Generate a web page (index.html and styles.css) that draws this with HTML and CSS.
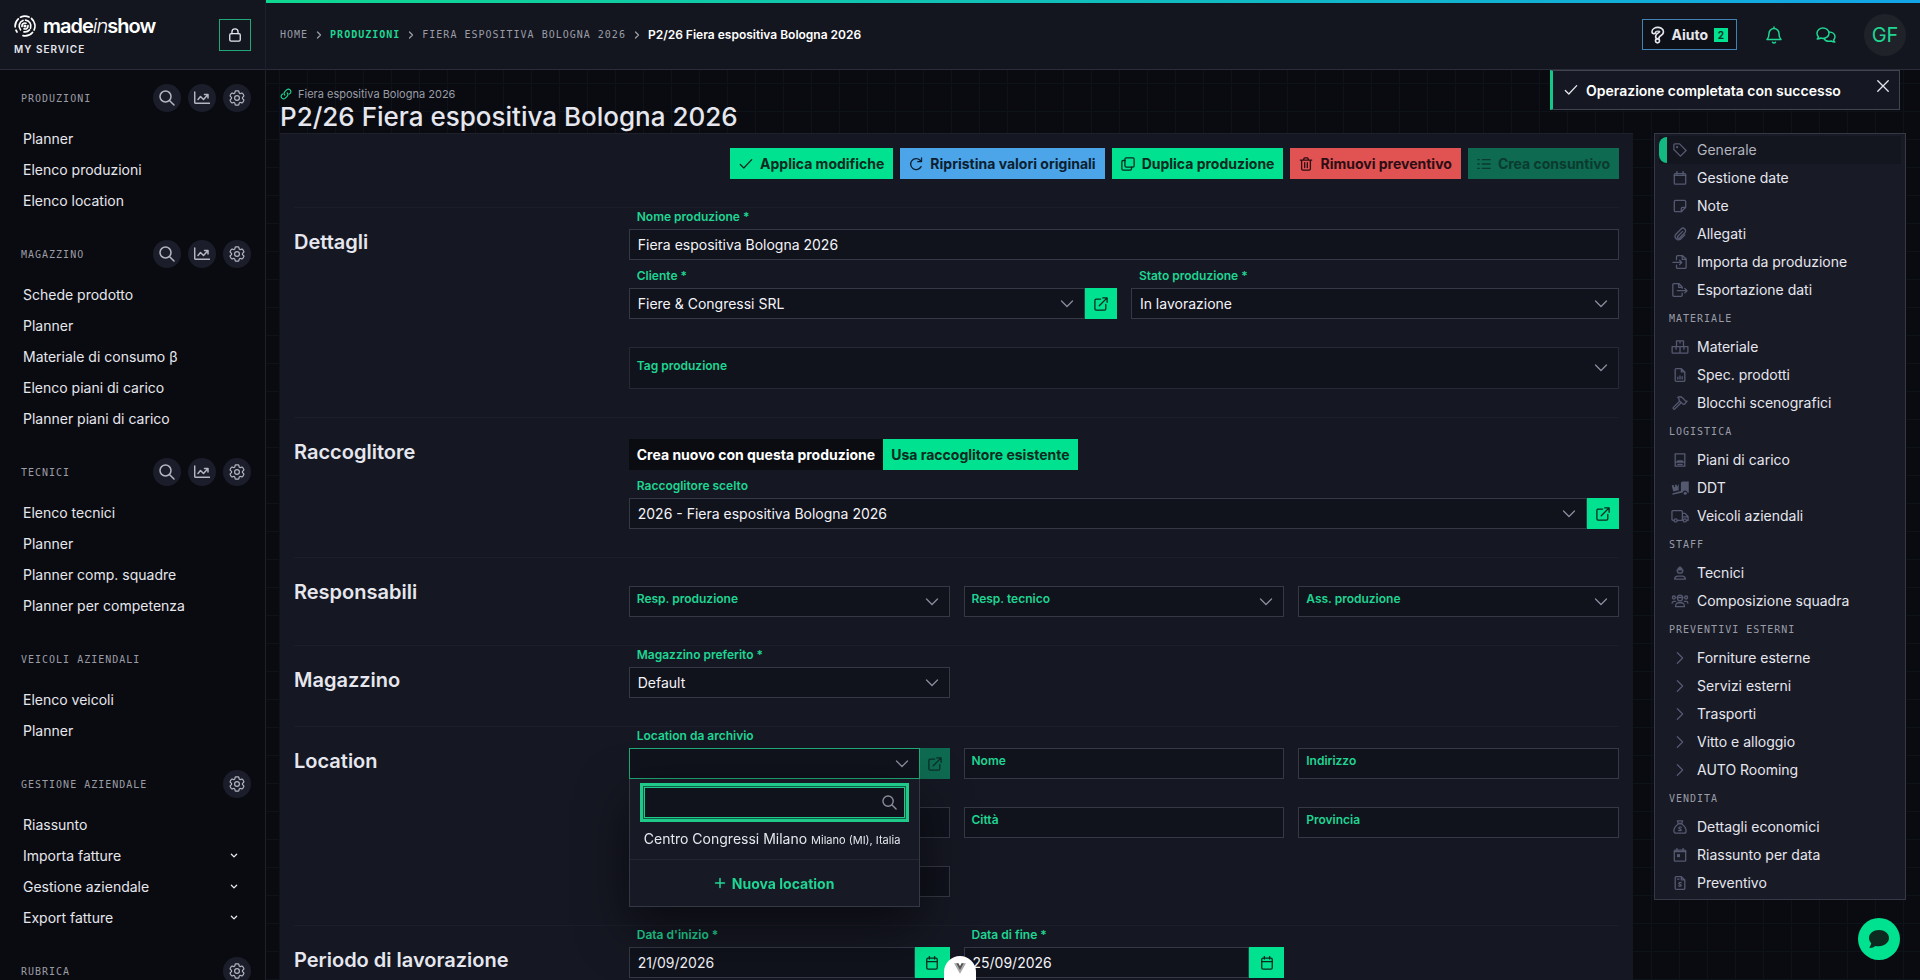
FILE: index.html
```html
<!DOCTYPE html>
<html lang="it">
<head>
  <meta charset="UTF-8">
  <title>P2/26 Fiera espositiva Bologna 2026</title>
  <meta name="viewport" content="width=device-width, initial-scale=1.0">
  <link rel="stylesheet" href="styles.css">
</head>
<body>

<!-- icons -->
<svg class="sprite" aria-hidden="true">
  <symbol id="i-search" viewBox="0 0 16 16"><circle cx="6.5" cy="6.5" r="5.5"/><path d="M10.7 10.7 15 15"/></symbol>
  <symbol id="i-chart" viewBox="0 0 16 16"><path d="M.7 2v10.3c0 .6.3 1 1 1H15.5M4 9.5l2.5-3 3 3L13.5 5M10.5 4.500H14V8"/></symbol>
  <symbol id="i-gear" viewBox="2 2 20 20"><path d="M9.594 3.94c.09-.542.56-.94 1.11-.94h2.593c.55 0 1.02.398 1.11.94l.213 1.281c.063.374.313.686.645.87.074.04.147.083.22.127.325.196.72.257 1.075.124l1.217-.456a1.125 1.125 0 0 1 1.37.49l1.296 2.247a1.125 1.125 0 0 1-.26 1.431l-1.003.827c-.293.241-.438.613-.43.992a7.723 7.723 0 0 1 0 .255c-.008.378.137.75.43.991l1.004.827c.424.35.534.955.26 1.43l-1.298 2.247a1.125 1.125 0 0 1-1.369.491l-1.217-.456c-.355-.133-.75-.072-1.076.124a6.47 6.47 0 0 1-.22.128c-.331.183-.581.495-.644.869l-.213 1.281c-.09.543-.56.94-1.11.94h-2.594c-.55 0-1.019-.398-1.11-.94l-.213-1.281c-.062-.374-.312-.686-.644-.87a6.52 6.52 0 0 1-.22-.127c-.325-.196-.72-.257-1.076-.124l-1.217.456a1.125 1.125 0 0 1-1.369-.49l-1.297-2.247a1.125 1.125 0 0 1 .26-1.431l1.004-.827c.292-.24.437-.613.43-.991a6.932 6.932 0 0 1 0-.255c.007-.38-.138-.751-.43-.992l-1.004-.827a1.125 1.125 0 0 1-.26-1.43l1.297-2.247a1.125 1.125 0 0 1 1.37-.491l1.216.456c.356.133.751.072 1.076-.124.072-.044.146-.086.22-.128.332-.183.582-.495.644-.869l.214-1.28Z"/><circle cx="12" cy="12" r="3"/></symbol>
  <symbol id="i-down" viewBox="0 0 16 16"><path d="m5 6 3 3 3-3"/></symbol>
  <symbol id="i-right" viewBox="0 0 16 16"><path d="m5 2 6 6-6 6"/></symbol>
  <symbol id="i-lock" viewBox="0 0 16 16"><rect x="2" y="6.5" width="12" height="8.5" rx="1.5"/><path d="M4.500 6.500V4.500a3.500 3.500 0 0 1 7 0v2"/></symbol>
  <symbol id="i-link" viewBox="0 0 16 16"><path d="M6.500 9.500a3.300 3.300 0 0 1 0-4.600l2.700-2.700a3.300 3.300 0 0 1 4.600 4.600L12.500 8M9.500 6.500a3.300 3.300 0 0 1 0 4.600l-2.700 2.700a3.300 3.300 0 0 1-4.600-4.600L3.500 8"/></symbol>
  <symbol id="i-check" viewBox="0 0 16 16"><path d="m1.500 8.500 4 4 9-9.500"/></symbol>
  <symbol id="i-redo" viewBox="0 0 16 16"><path d="M13.800 11A6.300 6.300 0 1 1 12.700 3.700L14.300 5.200M14.300 1v4.300H10"/></symbol>
  <symbol id="i-copy" viewBox="0 0 16 16"><rect x="4.500" y="1" width="10.500" height="10.500" rx="1.500"/><path d="M4.500 4H2.500A1.500 1.500 0 0 0 1 5.500v8A1.500 1.500 0 0 0 2.500 15h8a1.500 1.500 0 0 0 1.500-1.500v-2"/></symbol>
  <symbol id="i-trash" viewBox="0 0 16 16"><path d="M1.500 3.500h13M5 3.500 6 1h4l1 2.500M3 3.500v10A1.500 1.500 0 0 0 4.500 15h7a1.500 1.500 0 0 0 1.500-1.500v-10M6.500 6.500v5.500M9.500 6.500v5.500"/></symbol>
  <symbol id="i-list" viewBox="0 0 16 16"><path d="M6 3h9M6 8h9M6 13h9M1 3h1.500M1 8h1.500M1 13h1.500"/></symbol>
  <symbol id="i-open" viewBox="0 0 16 16"><path d="M7.500 2.500h-5A1.500 1.500 0 0 0 1 4v9.500A1.500 1.500 0 0 0 2.500 15H12a1.500 1.500 0 0 0 1.500-1.500v-5M10 1h5v5M15 1 6 10"/></symbol>
  <symbol id="i-cal" viewBox="0 0 16 16"><rect x="2" y="2.500" width="12" height="12.500" rx="1.500"/><path d="M2 6.500h12M5 .5v3M11 .5v3"/></symbol>
  <symbol id="i-plus" viewBox="0 0 16 16"><path d="M8 2v12M2 8h12"/></symbol>
  <symbol id="i-close" viewBox="0 0 16 16"><path d="m2 2 12 12M14 2 2 14"/></symbol>
  <symbol id="i-help" viewBox="0 0 16 20">
    <path class="q-out" d="M4 6.500C4 3 12.500 2.500 12.500 6.500c0 3-4.500 2.500-4.500 5.500"/>
    <circle class="q-dot" cx="8" cy="16.500" r="2.200"/>
    <path class="q-in" d="M4 6.500C4 3 12.500 2.500 12.500 6.500c0 3-4.500 2.500-4.500 5.500"/>
  </symbol>
  <symbol id="i-bell" viewBox="0 0 16 18"><path d="M8 1v1.500M1 13.500h14c-1.500-1.500-2-3-2-6a5 5 0 0 0-10 0c0 3-.5 4.500-2 6Z"/><path d="M6.500 16.200a1.700 1.700 0 0 0 3 0"/></symbol>
  <symbol id="i-chats" viewBox="0 0 20 16"><path d="M1.200 12C2 11.200 2.400 10.500 2.500 9.800A5 5 0 0 1 1 6.200C1 3.300 3.700 1 7 1s6 2.300 6 5.200-2.700 5.200-6 5.200a7 7 0 0 1-2.200-.4c-1 .6-2.200 1-3.600 1Z"/><path d="M13 5c3.400 0 6 2 6 4.800a5 5 0 0 1-1.400 3.200c.1.700.5 1.400 1.200 2-1.400 0-2.500-.4-3.500-1-3.200.8-6.300-.4-7.400-2.600"/></symbol>
  <symbol id="i-tag" viewBox="0 0 16 16"><path d="M1 2v5.500L8.500 15 15 8.500 7.500 1H2a1 1 0 0 0-1 1Z"/><circle cx="4.700" cy="4.700" r=".6"/></symbol>
  <symbol id="i-date" viewBox="0 0 16 16"><rect x="1.500" y="3" width="13" height="12" rx="1"/><path d="M1.500 5h13M4.500.5V4M11.500.5V4"/></symbol>
  <symbol id="i-note" viewBox="0 0 16 16"><path d="M9.500 14.500H3A1.500 1.500 0 0 1 1.500 13V3A1.500 1.500 0 0 1 3 1.500h10A1.500 1.500 0 0 1 14.500 3v6.500l-5 5v-3.500a1.500 1.500 0 0 1 1.500-1.500h3.500"/></symbol>
  <symbol id="i-clip" viewBox="0 0 16 16"><path d="m11 5-5.500 5.500a1.300 1.300 0 0 0 2 2L13.500 6.500a3 3 0 0 0-4.300-4.300L3 8.500A4 4 0 0 0 8.500 14l5-5"/></symbol>
  <symbol id="i-import" viewBox="0 0 16 16"><path d="M4 5.500V2A1.200 1.200 0 0 1 5.200.8H11L15 4.500V14a1.200 1.200 0 0 1-1.200 1.200H5.200A1.200 1.200 0 0 1 4 14v-2.500M10.500 1v4H15M0 8.500h10M7.500 6 10 8.500 7.500 11"/></symbol>
  <symbol id="i-export" viewBox="0 0 18 16"><path d="M11.500 6V4.500L8 .8H2A1.200 1.200 0 0 0 .8 2v12A1.200 1.200 0 0 0 2 15.200h8.300a1.200 1.200 0 0 0 1.200-1.200v-2.500M7.500 1v4h4M6 8.800h11M14.500 6.300 17 8.800l-2.500 2.500"/></symbol>
  <symbol id="i-boxes" viewBox="0 0 20 16"><path d="M6 1h8v6.500H6ZM1 7.500h9V15H2a1 1 0 0 1-1-1ZM10 7.500h9V14a1 1 0 0 1-1 1h-8ZM10 1v2.500M5.500 8v2.500M14.500 8v2.500"/></symbol>
  <symbol id="i-spec" viewBox="0 0 16 16"><path d="M2.500 2A1.200 1.200 0 0 1 3.700.8H9.500L13.500 4.500V14a1.200 1.200 0 0 1-1.200 1.200H3.700A1.200 1.200 0 0 1 2.500 14ZM9.500 1v3.500h4M5.500 10.500v2M8 9v3.500M10.500 10v2.500"/></symbol>
  <symbol id="i-hammer" viewBox="0 0 18 16"><path d="m8.500 6-7 7a1 1 0 0 0 1.700 1.700l7-7M6.500 1.500c2-1 4-.8 5.500.7L15 5.500l2 .5-3 3.500-2-.5-4-4V3.500Z"/></symbol>
  <symbol id="i-load" viewBox="0 0 16 16"><path d="M2.500 1h11v14h-11ZM2.500 10.500h11M5.500 13h5M4.500 10.500l1-1.500h5l1 1.500"/></symbol>
  <symbol id="i-ddt" viewBox="0 0 20 16"><path class="solid" d="M11 2 12.500.5H20V13.500h-1.200a3 3 0 0 0-5.800-.5L1.500 15.800 1 14.300 11 11.500ZM.5 5l2-.6.9 2.600 1.200-.4L4 4.500 6 4l.8 2.500L8.500 3v7.500L2.300 12Z"/><circle class="solid" cx="16" cy="14" r="1.800"/></symbol>
  <symbol id="i-truck" viewBox="0 0 20 16"><path d="M3 13H2a1.200 1.200 0 0 1-1.200-1.200V3A1.200 1.200 0 0 1 2 1.800h9.500A1.200 1.200 0 0 1 12.700 3v10H7M12.700 5h3l3.500 3.500V13H18M12.700 9h6.500"/><circle cx="5" cy="13" r="1.800"/><circle cx="15.500" cy="13" r="1.800"/></symbol>
  <symbol id="i-tech" viewBox="0 0 16 16"><path class="solid" d="M4 5h8v-.8h-.8A3.300 3.300 0 0 0 9 1.200V.5H7v.7a3.300 3.300 0 0 0-2.200 3H4Z"/><path d="M4.800 5a3.200 3.200 0 0 0 6.400 0M2 15a3.500 3.500 0 0 1 3.500-3.500h5A3.500 3.500 0 0 1 14 15Z"/></symbol>
  <symbol id="i-team" viewBox="0 0 20 16"><path d="M6.500 4h7M7.200 4a2.800 2.800 0 0 1 5.600 0v1a2.800 2.800 0 0 1-5.600 0ZM5 14.500v-1A3.500 3.500 0 0 1 8.500 10h3a3.500 3.500 0 0 1 3.500 3.500v1ZM1 10.500A2 2 0 0 1 3 8.500h2M19 10.500a2 2 0 0 0-2-2h-2"/><circle cx="3" cy="4" r="1.700"/><circle cx="17" cy="4" r="1.700"/></symbol>
  <symbol id="i-money" viewBox="0 0 16 16"><path d="M5 1h6L10 4H6ZM6 4.500C3 6.500 1 9.500 1 12.500A2.500 2.500 0 0 0 3.500 15h9a2.500 2.500 0 0 0 2.500-2.500c0-3-2-6-5-8ZM9.500 8.300C8 7.500 6.500 8 6.700 9.200c.2 1 2.600.8 2.700 2 .1 1.100-1.700 1.300-2.900.6"/></symbol>
  <symbol id="i-day" viewBox="0 0 16 16"><rect x="1.500" y="2.500" width="13" height="12.500" rx="1"/><path d="M1.500 4h13M4.500.5V3M11.500.5V3"/><path class="solid" d="M4.500 7H8v3.500H4.500z"/></symbol>
  <symbol id="i-quote" viewBox="0 0 16 16"><path d="M2.500 2A1.200 1.200 0 0 1 3.700.8H9.500L13.500 4.500V14a1.200 1.200 0 0 1-1.200 1.200H3.700A1.200 1.200 0 0 1 2.500 14ZM9.500 1v3.500h4M9.500 7.700C8 7 6.500 7.500 6.700 8.700c.2 1 2.600.8 2.700 2 .1 1.100-1.700 1.300-2.900.6M5 3.500h2"/></symbol>
</svg>

<div class="app">
  <aside class="sidebar">
    <div class="brand">
      <div>
        <a href="#" class="logo">
          <svg class="logo-mark" viewBox="0 0 22 22" fill="none" stroke="currentColor" stroke-width="1.700" stroke-linecap="round">
            <circle cx="11" cy="11" r="1.600" fill="currentColor" stroke="none"/>
            <path d="M6.500 14.800A5.900 5.900 0 0 1 9 5.500M11.500 5.100a5.900 5.900 0 0 1 5 8M15.500 14.900a5.900 5.900 0 0 1-5.500 1.900M8 11.500a3 3 0 0 1 4-3.300M14 10.500a3 3 0 0 1-4 3.300"/>
            <path d="M1.200 12A9.900 9.900 0 0 1 4.300 3.800M3 17a9.900 9.900 0 0 1-1-1.800M6.500 2.200A9.900 9.900 0 0 1 15 2M17.500 3.500a9.900 9.900 0 0 1 2.600 11.500M18.500 17.500A9.900 9.900 0 0 1 9 20.700"/>
          </svg>
          <span>made<i>in</i>show</span>
        </a>
        <div class="brand-sub">MY SERVICE</div>
      </div>
      <button class="lock-btn" aria-label="Blocca menu"><svg class="icon"><use href="#i-lock"/></svg></button>
    </div>

    <nav class="menu">
      <section>
        <header>
          <h2>PRODUZIONI</h2>
          <button class="round" aria-label="Cerca"><svg class="icon"><use href="#i-search"/></svg></button>
          <button class="round" aria-label="Statistiche"><svg class="icon"><use href="#i-chart"/></svg></button>
          <button class="round" aria-label="Impostazioni"><svg class="icon"><use href="#i-gear"/></svg></button>
        </header>
        <a href="#">Planner</a>
        <a href="#">Elenco produzioni</a>
        <a href="#">Elenco location</a>
      </section>
      <section>
        <header>
          <h2>MAGAZZINO</h2>
          <button class="round" aria-label="Cerca"><svg class="icon"><use href="#i-search"/></svg></button>
          <button class="round" aria-label="Statistiche"><svg class="icon"><use href="#i-chart"/></svg></button>
          <button class="round" aria-label="Impostazioni"><svg class="icon"><use href="#i-gear"/></svg></button>
        </header>
        <a href="#">Schede prodotto</a>
        <a href="#">Planner</a>
        <a href="#">Materiale di consumo β</a>
        <a href="#">Elenco piani di carico</a>
        <a href="#">Planner piani di carico</a>
      </section>
      <section>
        <header>
          <h2>TECNICI</h2>
          <button class="round" aria-label="Cerca"><svg class="icon"><use href="#i-search"/></svg></button>
          <button class="round" aria-label="Statistiche"><svg class="icon"><use href="#i-chart"/></svg></button>
          <button class="round" aria-label="Impostazioni"><svg class="icon"><use href="#i-gear"/></svg></button>
        </header>
        <a href="#">Elenco tecnici</a>
        <a href="#">Planner</a>
        <a href="#">Planner comp. squadre</a>
        <a href="#">Planner per competenza</a>
      </section>
      <section>
        <header>
          <h2>VEICOLI AZIENDALI</h2>
        </header>
        <a href="#">Elenco veicoli</a>
        <a href="#">Planner</a>
      </section>
      <section>
        <header>
          <h2>GESTIONE AZIENDALE</h2>
          <button class="round" aria-label="Impostazioni"><svg class="icon"><use href="#i-gear"/></svg></button>
        </header>
        <a href="#">Riassunto</a>
        <a href="#">Importa fatture <svg class="icon"><use href="#i-down"/></svg></a>
        <a href="#">Gestione aziendale <svg class="icon"><use href="#i-down"/></svg></a>
        <a href="#">Export fatture <svg class="icon"><use href="#i-down"/></svg></a>
      </section>
      <section>
        <header>
          <h2>RUBRICA</h2>
          <button class="round" aria-label="Impostazioni"><svg class="icon"><use href="#i-gear"/></svg></button>
        </header>
      </section>
    </nav>
  </aside>

  <div class="main">
    <header class="topbar">
      <nav class="crumbs">
        <a href="#">HOME</a>
        <svg class="icon"><use href="#i-right"/></svg>
        <a href="#" class="active">PRODUZIONI</a>
        <svg class="icon"><use href="#i-right"/></svg>
        <a href="#">FIERA ESPOSITIVA BOLOGNA 2026</a>
        <svg class="icon"><use href="#i-right"/></svg>
        <strong>P2/26 Fiera espositiva Bologna 2026</strong>
      </nav>
      <button class="help-btn"><svg class="icon"><use href="#i-help"/></svg>Aiuto<span class="count">2</span></button>
      <button class="top-icon" aria-label="Notifiche"><svg class="icon"><use href="#i-bell"/></svg></button>
      <button class="top-icon" aria-label="Messaggi"><svg class="icon"><use href="#i-chats"/></svg></button>
      <button class="avatar">GF</button>
    </header>

    <div class="content">
      <div class="page-head">
        <a href="#"><svg class="icon"><use href="#i-link"/></svg>Fiera espositiva Bologna 2026</a>
        <h1>P2/26 Fiera espositiva Bologna 2026</h1>
      </div>

      <div class="columns">
        <form class="panel">
          <div class="toolbar">
            <button type="button" class="btn"><svg class="icon"><use href="#i-check"/></svg>Applica modifiche</button>
            <button type="button" class="btn blue"><svg class="icon"><use href="#i-redo"/></svg>Ripristina valori originali</button>
            <button type="button" class="btn"><svg class="icon"><use href="#i-copy"/></svg>Duplica produzione</button>
            <button type="button" class="btn red"><svg class="icon"><use href="#i-trash"/></svg>Rimuovi preventivo</button>
            <button type="button" class="btn" disabled><svg class="icon"><use href="#i-list"/></svg>Crea consuntivo</button>
          </div>

          <section class="group">
            <h2>Dettagli</h2>
            <div class="fields two">
              <div class="field wide">
                <label for="nome">Nome produzione *</label>
                <input id="nome" type="text" value="Fiera espositiva Bologna 2026">
              </div>
              <div class="field">
                <label for="cliente">Cliente *</label>
                <div class="joined">
                  <select id="cliente"><option>Fiere &amp; Congressi SRL</option></select>
                  <button type="button" class="side-btn" aria-label="Apri cliente"><svg class="icon"><use href="#i-open"/></svg></button>
                </div>
              </div>
              <div class="field">
                <label for="stato">Stato produzione *</label>
                <select id="stato"><option>In lavorazione</option></select>
              </div>
              <div class="field wide inside tags">
                <select id="tag"><option></option></select>
                <label for="tag">Tag produzione</label>
              </div>
            </div>
          </section>

          <section class="group">
            <h2>Raccoglitore</h2>
            <div class="fields">
              <div class="switch">
                <button type="button">Crea nuovo con questa produzione</button>
                <button type="button" class="on">Usa raccoglitore esistente</button>
              </div>
              <div class="field">
                <label for="raccoglitore">Raccoglitore scelto</label>
                <div class="joined">
                  <select id="raccoglitore"><option>2026 - Fiera espositiva Bologna 2026</option></select>
                  <button type="button" class="side-btn" aria-label="Apri raccoglitore"><svg class="icon"><use href="#i-open"/></svg></button>
                </div>
              </div>
            </div>
          </section>

          <section class="group">
            <h2>Responsabili</h2>
            <div class="fields three spaced">
              <div class="field inside">
                <select id="resp-prod"><option></option></select>
                <label for="resp-prod">Resp. produzione</label>
              </div>
              <div class="field inside">
                <select id="resp-tec"><option></option></select>
                <label for="resp-tec">Resp. tecnico</label>
              </div>
              <div class="field inside">
                <select id="ass-prod"><option></option></select>
                <label for="ass-prod">Ass. produzione</label>
              </div>
            </div>
          </section>

          <section class="group">
            <h2>Magazzino</h2>
            <div class="fields three">
              <div class="field">
                <label for="magazzino">Magazzino preferito *</label>
                <select id="magazzino"><option>Default</option></select>
              </div>
            </div>
          </section>

          <section class="group">
            <h2>Location</h2>
            <div class="fields three">
              <div class="field">
                <label for="location">Location da archivio</label>
                <div class="joined">
                  <div class="combo">
                    <select id="location" class="open"><option></option></select>
                    <div class="dropdown">
                      <div class="dropdown-search">
                        <input type="text" aria-label="Cerca location">
                        <svg class="icon"><use href="#i-search"/></svg>
                      </div>
                      <button type="button" class="dropdown-option">Centro Congressi Milano <small>Milano (MI), Italia</small></button>
                      <button type="button" class="dropdown-add"><svg class="icon"><use href="#i-plus"/></svg>Nuova location</button>
                    </div>
                  </div>
                  <button type="button" class="side-btn" aria-label="Apri location" disabled><svg class="icon"><use href="#i-open"/></svg></button>
                </div>
              </div>
              <div class="field inside">
                <input id="loc-nome" type="text">
                <label for="loc-nome">Nome</label>
              </div>
              <div class="field inside">
                <input id="indirizzo" type="text">
                <label for="indirizzo">Indirizzo</label>
              </div>
              <div class="field inside">
                <input id="cap" type="text">
                <label for="cap">CAP</label>
              </div>
              <div class="field inside">
                <input id="citta" type="text">
                <label for="citta">Città</label>
              </div>
              <div class="field inside">
                <input id="provincia" type="text">
                <label for="provincia">Provincia</label>
              </div>
              <div class="field inside">
                <input id="nazione" type="text">
                <label for="nazione">Nazione</label>
              </div>
            </div>
          </section>

          <section class="group">
            <h2>Periodo di lavorazione</h2>
            <div class="fields three">
              <div class="field">
                <label for="inizio">Data d'inizio *</label>
                <div class="joined">
                  <input id="inizio" type="text" value="21/09/2026">
                  <button type="button" class="side-btn date" aria-label="Scegli data d'inizio"><svg class="icon"><use href="#i-cal"/></svg></button>
                </div>
              </div>
              <div class="field">
                <label for="fine">Data di fine *</label>
                <div class="joined">
                  <input id="fine" type="text" value="25/09/2026">
                  <button type="button" class="side-btn date" aria-label="Scegli data di fine"><svg class="icon"><use href="#i-cal"/></svg></button>
                </div>
              </div>
            </div>
          </section>
        </form>

        <nav class="toc">
          <a href="#" class="current"><svg class="icon"><use href="#i-tag"/></svg>Generale</a>
          <a href="#"><svg class="icon"><use href="#i-date"/></svg>Gestione date</a>
          <a href="#"><svg class="icon"><use href="#i-note"/></svg>Note</a>
          <a href="#"><svg class="icon"><use href="#i-clip"/></svg>Allegati</a>
          <a href="#"><svg class="icon"><use href="#i-import"/></svg>Importa da produzione</a>
          <a href="#"><svg class="icon"><use href="#i-export"/></svg>Esportazione dati</a>
          <h3>MATERIALE</h3>
          <a href="#"><svg class="icon"><use href="#i-boxes"/></svg>Materiale</a>
          <a href="#"><svg class="icon"><use href="#i-spec"/></svg>Spec. prodotti</a>
          <a href="#"><svg class="icon"><use href="#i-hammer"/></svg>Blocchi scenografici</a>
          <h3>LOGISTICA</h3>
          <a href="#"><svg class="icon"><use href="#i-load"/></svg>Piani di carico</a>
          <a href="#"><svg class="icon"><use href="#i-ddt"/></svg>DDT</a>
          <a href="#"><svg class="icon"><use href="#i-truck"/></svg>Veicoli aziendali</a>
          <h3>STAFF</h3>
          <a href="#"><svg class="icon"><use href="#i-tech"/></svg>Tecnici</a>
          <a href="#"><svg class="icon"><use href="#i-team"/></svg>Composizione squadra</a>
          <h3>PREVENTIVI ESTERNI</h3>
          <a href="#"><svg class="icon"><use href="#i-right"/></svg>Forniture esterne</a>
          <a href="#"><svg class="icon"><use href="#i-right"/></svg>Servizi esterni</a>
          <a href="#"><svg class="icon"><use href="#i-right"/></svg>Trasporti</a>
          <a href="#"><svg class="icon"><use href="#i-right"/></svg>Vitto e alloggio</a>
          <a href="#"><svg class="icon"><use href="#i-right"/></svg>AUTO Rooming</a>
          <h3>VENDITA</h3>
          <a href="#"><svg class="icon"><use href="#i-money"/></svg>Dettagli economici</a>
          <a href="#"><svg class="icon"><use href="#i-day"/></svg>Riassunto per data</a>
          <a href="#"><svg class="icon"><use href="#i-quote"/></svg>Preventivo</a>
        </nav>
      </div>
    </div>
  </div>
</div>

<div class="toast" role="status">
  <svg class="icon"><use href="#i-check"/></svg>
  <strong>Operazione completata con successo</strong>
  <button aria-label="Chiudi"><svg class="icon"><use href="#i-close"/></svg></button>
</div>

<button class="chat-btn" aria-label="Apri chat">
  <svg viewBox="0 0 20 18"><path d="M10 0C4.500 0 0 3.500 0 8c0 2 .8 3.700 2.200 5C2 14.500 1.500 16 .6 17.300c-.3.400 0 .7.400.7 2 0 4-1 5.200-2A12 12 0 0 0 10 16.200c5.500 0 10-3.700 10-8.200S15.500 0 10 0Z"/></svg>
</button>

<button class="dev-btn" aria-label="DevTools">
  <svg viewBox="0 0 16 14"><path fill="#aaa" d="M0 0h5l3 6 3-6h5L8 14Z"/><path fill="#555" d="M3 0h3l2 4 2-4h3L8 9Z"/></svg>
</button>

</body>
</html>
```

FILE: styles.css
```css
:root {
  --green: #00e28f;
  --label: #1fd592;
  --line: #353845;
  --panel: #151722;
  --input: #10121c;
  --text: #e6e7ee;
  --muted: #9a9ca6;
}
* {
  box-sizing: border-box;
}
body {
  margin: 0;
  font-family: Inter, "Liberation Sans", sans-serif;
  font-size: 14px;
  color: var(--text);
  background-color: #090b11;
}
h1, h2, h3 {
  margin: 0;
}
a {
  color: inherit;
  text-decoration: none;
}
button, input, select {
  font-family: inherit;
  font-size: 14px;
  color: inherit;
}
button {
  border: none;
  padding: 0;
  background: none;
  cursor: pointer;
}
.sprite {
  display: none;
}
.icon {
  width: 14px;
  height: 14px;
  flex: none;
  fill: none;
  stroke: currentColor;
  stroke-width: 1.5;
  stroke-linecap: round;
  stroke-linejoin: round;
}
.solid {
  fill: currentColor;
  stroke: none;
}
.q-out {
  stroke-width: 6;
}
.q-in {
  stroke: #0e1018;
  stroke-width: 2.5;
}
.q-dot {
  stroke-width: 1.8;
}

/* layout */
.app {
  display: flex;
  height: 100vh;
}
.sidebar {
  width: 266px;
  flex: none;
  display: flex;
  flex-direction: column;
  overflow: hidden;
  background-color: #0a0b10;
  border-right: 1px solid #1e202a;
}
.main {
  flex: 1;
  min-width: 0;
  display: flex;
  flex-direction: column;
  background-image:
    linear-gradient(to right, transparent 27px, #0e1319 27px),
    linear-gradient(to bottom, transparent 27px, #0e1319 27px);
  background-size: 28px 28px;
  background-attachment: fixed;
}

/* sidebar */
.brand {
  height: 70px;
  flex: none;
  display: flex;
  align-items: center;
  justify-content: space-between;
  padding: 0 14px;
  background-color: #14161f;
  border-bottom: 1px solid #2a2d39;
}
.logo {
  display: flex;
  align-items: center;
  gap: 7px;
  height: 24px;
  font-size: 20px;
  font-weight: 600;
  letter-spacing: -1px;
  color: #fff;
}
.logo i {
  font-weight: 300;
}
.logo-mark {
  width: 22px;
  height: 22px;
}
.brand-sub {
  margin-top: 4px;
  font-size: 10px;
  line-height: 14px;
  font-weight: 600;
  letter-spacing: 1px;
}
.lock-btn {
  width: 32px;
  height: 32px;
  display: flex;
  align-items: center;
  justify-content: center;
  border: 1px solid #1fa878;
}
.menu {
  flex: 1;
  display: flex;
  flex-direction: column;
  gap: 23px;
  padding: 14px 14px 0 21px;
  overflow: auto;
  scrollbar-width: none;
}
.menu header {
  display: flex;
  align-items: center;
  gap: 7px;
  height: 28px;
  margin-bottom: 12px;
}
.menu h2, .toc h3 {
  flex: 1;
  font-family: "DejaVu Sans Mono", monospace;
  font-size: 10px;
  font-weight: 400;
  letter-spacing: 1px;
  color: var(--muted);
}
.round {
  width: 28px;
  height: 28px;
  display: flex;
  align-items: center;
  justify-content: center;
  border-radius: 50%;
  background-color: #1b1d2a;
  color: #b4b6c2;
}
.round .icon {
  width: 16px;
  height: 16px;
}
.menu a {
  display: flex;
  align-items: center;
  justify-content: space-between;
  height: 31px;
  padding: 0 10px 2px 2px;
}

/* top bar */
.topbar {
  height: 70px;
  flex: none;
  display: flex;
  align-items: center;
  padding: 0 14px;
  background: linear-gradient(to right, #0fd790, #12a5e8) top / 100% 3px no-repeat #14161f;
  border-bottom: 1px solid #2a2d39;
}
.crumbs {
  flex: 1;
  display: flex;
  align-items: center;
  gap: 7px;
  font-family: "DejaVu Sans Mono", monospace;
  font-size: 10px;
  letter-spacing: 1px;
  color: var(--muted);
}
.crumbs .icon {
  width: 8px;
  height: 8px;
  stroke-width: 2.5;
}
.crumbs .active {
  color: var(--label);
  font-weight: 700;
}
.crumbs strong {
  font-family: Inter, sans-serif;
  font-size: 12px;
  font-weight: 600;
  letter-spacing: 0;
  color: #fff;
}
.help-btn {
  height: 31px;
  display: flex;
  align-items: center;
  gap: 6px;
  padding: 0 8px 0 7px;
  margin-right: 23px;
  border: 1px solid #4183b4;
  background-color: #0e1018;
  font-weight: 700;
}
.help-btn .icon {
  width: 15px;
  height: 18px;
}
.count {
  width: 14px;
  line-height: 14px;
  font-size: 10px;
  background-color: var(--green);
  color: #0d3527;
}
.top-icon {
  width: 28px;
  height: 28px;
  display: flex;
  align-items: center;
  justify-content: center;
  margin-right: 24px;
  color: var(--label);
}
.top-icon .icon {
  width: 20px;
  height: 18px;
}
.avatar {
  width: 42px;
  height: 42px;
  border-radius: 50%;
  background-color: #20222a;
  color: var(--label);
  font-size: 20px;
}

/* content */
.content {
  flex: 1;
  padding: 14px 14px 0;
  overflow: auto;
  scrollbar-width: none;
}
.page-head {
  height: 49px;
}
.page-head a {
  display: flex;
  align-items: center;
  gap: 6px;
  line-height: 20px;
  font-size: 11px;
  color: var(--muted);
}
.page-head a .icon {
  width: 12px;
  height: 12px;
  color: var(--label);
}
.page-head h1 {
  font-size: 26px;
  line-height: 26px;
  font-weight: 500;
}
.columns {
  display: flex;
  align-items: flex-start;
  gap: 21px;
}
.panel {
  flex: 1;
  min-width: 0;
  padding: 14px 14px 0;
  background-color: var(--panel);
  border-top: 1px solid #1e212c;
}
.toolbar {
  display: flex;
  justify-content: flex-end;
  gap: 7px;
  margin-bottom: 28px;
}
.btn {
  height: 31px;
  display: flex;
  align-items: center;
  gap: 7px;
  padding: 0 9px;
  background-color: var(--green);
  color: #0b2a20;
  font-weight: 700;
}
.btn.blue {
  background-color: #4ba5e8;
  color: #0c1e30;
}
.btn.red {
  background-color: #e15252;
  color: #2c0d12;
}
.btn:disabled {
  background-color: #0e6a50;
  color: #0b3a2f;
}
.group {
  display: grid;
  grid-template-columns: repeat(4, minmax(0, 1fr));
  gap: 14px;
  padding-bottom: 28px;
  border-top: 1px solid #1b1e28;
}
.group h2 {
  padding-top: 21px;
  font-size: 20px;
  line-height: 26px;
  font-weight: 600;
  white-space: nowrap;
}
.fields {
  grid-column: span 3;
  display: grid;
  gap: 7px 14px;
}
.fields.two {
  grid-template-columns: repeat(2, minmax(0, 1fr));
}
.fields.three {
  grid-template-columns: repeat(3, minmax(0, 1fr));
}
.spaced {
  padding-top: 7px;
}
.wide {
  grid-column: 1 / -1;
}
.field label {
  display: block;
  padding: 0 0 3px 8px;
  font-size: 12px;
  line-height: 18px;
  font-weight: 600;
  color: var(--label);
}
.field input, .field select {
  display: block;
  width: 100%;
  min-width: 0;
  height: 31px;
  padding: 0 8px;
  border: 1px solid var(--line);
  border-radius: 0;
  outline: none;
  background-color: var(--input);
  color: #f4f4f8;
}
.field select {
  appearance: none;
  background-image: url("data:image/svg+xml,%3Csvg xmlns='http://www.w3.org/2000/svg' viewBox='0 0 14 14' fill='none' stroke='%23898c9b' stroke-width='1.3' stroke-linecap='round'%3E%3Cpath d='m1.500 4 5.500 5.500L12.500 4'/%3E%3C/svg%3E");
  background-repeat: no-repeat;
  background-position: right 10px center;
  background-size: 14px 14px;
}
/* empty fields keep their label over the control */
.inside {
  position: relative;
  padding-top: 21px;
}
.inside label {
  position: absolute;
  left: 0;
  bottom: 6px;
  pointer-events: none;
}
.tags select {
  height: 42px;
  border-color: #272a36;
}
.tags label {
  bottom: 11px;
}
.joined {
  display: flex;
}
.side-btn {
  width: 32px;
  flex: none;
  display: flex;
  align-items: center;
  justify-content: center;
  background-color: var(--green);
  color: #0b2a20;
}
.side-btn.date {
  width: 35px;
}
.side-btn:disabled {
  width: 30px;
  background-color: #0e6a50;
  color: #0b2f28;
}
.switch {
  display: flex;
  padding-top: 21px;
}
.switch button {
  height: 31px;
  padding: 0 8px;
  background-color: #0a0c12;
  color: #fff;
  font-weight: 700;
}
.switch .on {
  background-color: var(--green);
  color: #0b2a20;
}

/* location dropdown */
.combo {
  position: relative;
  flex: 1;
  min-width: 0;
}
.field select.open {
  border-color: #1fa878;
}
.dropdown {
  position: absolute;
  z-index: 5;
  top: 100%;
  left: 0;
  right: 0;
  padding-top: 8px;
  background-color: #171924;
  border: 1px solid #343744;
  border-top: none;
  box-shadow: 0 20px 50px rgba(0, 0, 0, 0.5);
}
.dropdown-search {
  position: relative;
  margin: 0 14px;
}
.dropdown .dropdown-search input {
  padding-right: 32px;
  border-color: #1fc98a;
  box-shadow: 0 0 0 1px #0d5c45, 0 0 0 4px #1fc98a;
}
.dropdown-search .icon {
  position: absolute;
  right: 8px;
  top: 8px;
  width: 15px;
  height: 15px;
  color: #8a8d9b;
}
.dropdown-option {
  display: block;
  width: 100%;
  height: 41px;
  padding: 0 14px;
  text-align: left;
  white-space: nowrap;
}
.dropdown-option small {
  font-size: 11px;
}
.dropdown-add {
  width: 100%;
  height: 47px;
  display: flex;
  align-items: center;
  justify-content: center;
  gap: 6px;
  border-top: 1px solid #242733;
  font-weight: 700;
  color: var(--label);
}
.dropdown-add .icon {
  width: 12px;
  height: 12px;
  stroke-width: 2;
}

/* section index */
.toc {
  width: 252px;
  flex: none;
  padding: 2px 4px;
  background-color: #181a26;
  border: 1px solid #363945;
}
.toc a {
  display: flex;
  align-items: center;
  gap: 8px;
  height: 28px;
  padding: 0 0 1px 12px;
}
.toc a .icon {
  width: 18px;
  color: #555970;
}
.toc h3 {
  padding-left: 10px;
  line-height: 29px;
}
.toc a.current {
  padding-left: 4px;
  background-color: #13151f;
  color: #b2b4be;
}
.toc a.current::before {
  content: "";
  width: 8px;
  height: 26px;
  margin-left: -4px;
  margin-right: -4px;
  border-radius: 8px 0 0 8px;
  background-color: #12b981;
}

/* floating */
.toast {
  position: fixed;
  top: 70px;
  right: 20px;
  width: 350px;
  height: 40px;
  display: flex;
  align-items: center;
  gap: 8px;
  padding: 0 9px 0 11px;
  background-color: #151722;
  border: 1px solid #41444f;
  border-left: 3px solid #12c98a;
}
.toast strong {
  flex: 1;
  font-weight: 600;
  color: #fff;
}
.toast button {
  align-self: flex-start;
  padding-top: 8px;
}
.chat-btn {
  position: fixed;
  right: 20px;
  bottom: 20px;
  width: 42px;
  height: 42px;
  display: flex;
  align-items: center;
  justify-content: center;
  border-radius: 50%;
  background-color: var(--green);
}
.chat-btn svg {
  width: 20px;
  height: 18px;
  fill: #0c2a20;
}
.dev-btn {
  position: fixed;
  left: 50%;
  bottom: 0;
  width: 32px;
  height: 24px;
  margin-left: -16px;
  display: flex;
  align-items: center;
  justify-content: center;
  border-radius: 16px 16px 0 0;
  background-color: #fff;
}
.dev-btn svg {
  width: 12px;
  height: 11px;
}
```
